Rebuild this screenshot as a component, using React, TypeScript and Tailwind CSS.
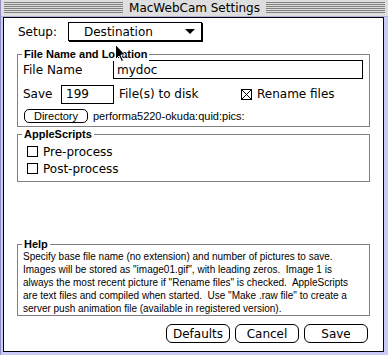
import React from 'react';

const ui = "font-['DejaVu_Sans',sans-serif] text-[12px] text-black";
const small = "font-['Liberation_Sans',Arial,sans-serif]";

function GroupBox({ label, className, children }: { label: string; className: string; children?: React.ReactNode }) {
  return (
    <div className={`relative ml-[13px] w-[353px] border border-[#808080] ${className}`}>
      <span className={`absolute -top-[8px] left-[4px] bg-white px-[2px] ${small} text-[11px] font-bold leading-[14px]`}>
        {label}
      </span>
      {children}
    </div>
  );
}

function CheckBox({ checked = false }: { checked?: boolean }) {
  return (
    <span className="inline-flex h-[11px] w-[11px] shrink-0 items-center justify-center border border-black bg-white">
      {checked && (
        <svg width="9" height="9" viewBox="0 0 9 9">
          <path d="M0 0L9 9M9 0L0 9" stroke="black" strokeWidth="1" shapeRendering="crispEdges" />
        </svg>
      )}
    </span>
  );
}

function MacButton({ label }: { label: string }) {
  return (
    <button className="flex h-[19px] w-[64px] items-center justify-center rounded-[6px] border border-black bg-white leading-none">
      {label}
    </button>
  );
}

export default function App() {
  return (
    <div className={`relative h-[355px] w-[388px] overflow-hidden border-l border-[#8c8cc0] bg-[#cacaf6] ${ui}`}>
      {/* title bar */}
      <div className="flex h-[17px] items-center border-b border-[#b0b0d8] bg-[#dedede] px-[3px]">
        <div className="h-[12px] flex-1 bg-[repeating-linear-gradient(to_bottom,#808080_0px,#808080_1px,#dedede_1px,#dedede_2px)]" />
        <span className="px-[6px] leading-[16px]">MacWebCam Settings</span>
        <div className="h-[12px] flex-1 bg-[repeating-linear-gradient(to_bottom,#808080_0px,#808080_1px,#dedede_1px,#dedede_2px)]" />
      </div>

      {/* content */}
      <div className="ml-[2px] mr-[4px] flex h-[335px] flex-col border border-black bg-white">
        <div className="mt-[4px] flex h-[19px] items-center">
          <span className="ml-[14px] w-[50px]">Setup:</span>
          <div className="flex h-[19px] w-[134px] items-center border border-black bg-white pl-[15px] pr-[6px] shadow-[1px_1px_0_#000]">
            <span className="flex-1">Destination</span>
            <svg width="10" height="5" viewBox="0 0 10 5">
              <path d="M0 0H10L5 5Z" fill="black" />
            </svg>
          </div>
        </div>

        <GroupBox label="File Name and Location" className="mt-[13px] h-[73px]">
          <div className="mt-[5px] flex h-[19px] items-center">
            <span className="ml-[5px] w-[90px]">File Name</span>
            <div className="flex h-[19px] w-[250px] items-center border border-black pl-[3px]">mydoc</div>
          </div>
          <div className="mt-[6px] flex h-[18px] items-center">
            <span className="ml-[5px] w-[38px]">Save</span>
            <div className="flex h-[19px] w-[53px] items-center border border-black pl-[4px]">199</div>
            <span className="ml-[5px] w-[122px]">File(s) to disk</span>
            <CheckBox checked />
            <span className="ml-[5px]">Rename files</span>
          </div>
          <div className="mt-[6px] flex h-[14px] items-center">
            <div className={`ml-[6px] flex h-[14px] w-[64px] items-center justify-center rounded-[5px] border border-black ${small} text-[11px] leading-none`}>
              Directory
            </div>
            <span className={`ml-[5px] ${small} text-[11px] leading-none`}>performa5220-okuda:quid:pics:</span>
          </div>
        </GroupBox>

        <GroupBox label="AppleScripts" className="mt-[7px] h-[48px]">
          <div className="mt-[10px] flex h-[13px] items-center gap-[5px] pl-[9px]">
            <CheckBox />
            <span>Pre-process</span>
          </div>
          <div className="mt-[4px] flex h-[13px] items-center gap-[5px] pl-[9px]">
            <CheckBox />
            <span>Post-process</span>
          </div>
        </GroupBox>

        <GroupBox label="Help" className="mt-[62px] h-[72px]">
          <p className={`mt-[5px] pl-[5px] pr-[4px] ${small} text-[10px] leading-[13px]`}>
            Specify base file name (no extension) and number of pictures to save.
            <br />
            Images will be stored as "image01.gif", with leading zeros.&nbsp; Image 1 is
            <br />
            always the most recent picture if "Rename files" is checked.&nbsp; AppleScripts
            <br />
            are text files and compiled when started.&nbsp; Use "Make .raw file" to create a
            <br />
            server push animation file (available in registered version).
          </p>
        </GroupBox>

        <div className="mt-[8px] flex justify-end gap-[5px] pr-[15px]">
          <MacButton label="Defaults" />
          <MacButton label="Cancel" />
          <MacButton label="Save" />
        </div>
      </div>

      {/* mouse pointer */}
      <svg className="absolute left-[114px] top-[44px]" width="12" height="19" viewBox="0 0 12 19">
        <path d="M0.5 0.5V15.5L4 12L6.5 17.5L8.5 16.5L6 11H10.5Z" fill="black" stroke="white" strokeWidth="1" />
      </svg>
    </div>
  );
}
